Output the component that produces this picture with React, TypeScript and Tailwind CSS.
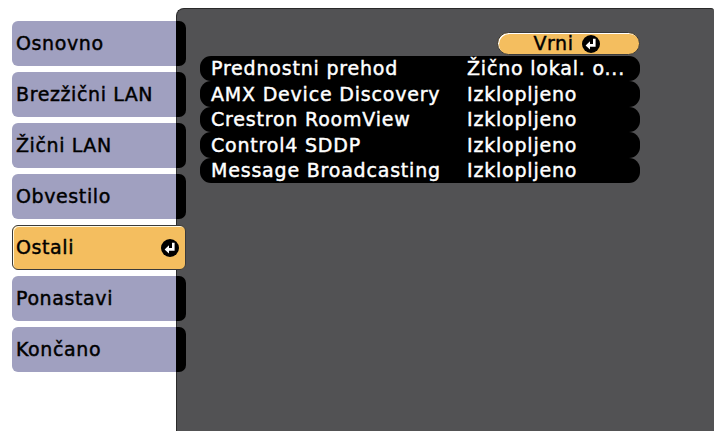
const tabs = [
  "Osnovno",
  "Brezžični LAN",
  "Žični LAN",
  "Obvestilo",
  "Ostali",
  "Ponastavi",
  "Končano",
];

const rows = [
  { label: "Prednostni prehod", value: "Žično lokal. o..." },
  { label: "AMX Device Discovery", value: "Izklopljeno" },
  { label: "Crestron RoomView", value: "Izklopljeno" },
  { label: "Control4 SDDP", value: "Izklopljeno" },
  { label: "Message Broadcasting", value: "Izklopljeno" },
];

function EnterIcon() {
  return (
    <svg width="18" height="18" viewBox="0 0 18 18" className="shrink-0">
      <circle cx="9" cy="9" r="9" fill="#000" />
      <path d="M12.3 3.8 V10.4 H7" fill="none" stroke="#fff" strokeWidth="2.6" />
      <path d="M8 6.2 L3.6 10.4 L8 14.6 Z" fill="#fff" />
    </svg>
  );
}

export default function App() {
  return (
    <div
      className="w-[714px] h-[433px] bg-white flex items-start pl-[12px] overflow-hidden [-webkit-text-stroke:0.45px]"
      style={{ fontFamily: '"DejaVu Sans", sans-serif' }}
    >
      {/* left menu */}
      <div className="relative z-10 mt-[21px] w-[174px] -mr-[10px] flex flex-col gap-[6px] shrink-0">
        {tabs.map((t) =>
          t === "Ostali" ? (
            <div
              key={t}
              className="h-[45px] w-[174px] flex items-center justify-between pl-[3px] pr-[6px] rounded-[6px] bg-[#f4be5f] border border-[#3a3a3a] shadow-[inset_1px_1px_0_#fff8e0] text-[19px] tracking-[0.6px] text-black"
            >
              <span>{t}</span>
              <EnterIcon />
            </div>
          ) : (
            <div key={t} className="h-[45px] flex">
              <div className="w-[164px] h-full flex items-center pl-[4px] rounded-l-[6px] bg-[#a0a0c0] text-[19px] tracking-[0.6px] text-black">
                {t}
              </div>
              <div className="w-[10px] h-full bg-black rounded-r-[7px]" />
            </div>
          )
        )}
      </div>

      {/* settings panel */}
      <div className="mt-[8px] h-[423px] flex-1 bg-[#525254] border-t border-l border-[#2a2a2a] rounded-tl-[8px] rounded-tr-[3px] flex flex-col pt-[23px]">
        <div className="flex justify-end pr-[74px]">
          <div className="w-[143px] h-[23px] flex items-center justify-center gap-[8px] pr-[4px] rounded-full bg-[#f4be5f] border border-[#3a3a3a] shadow-[inset_1px_1px_0_#fff] text-[19px] tracking-[0.6px] text-black">
            <span>Vrni</span>
            <EnterIcon />
          </div>
        </div>
        <div className="ml-[23px] w-[440px] mt-[1px] flex flex-col">
          {rows.map((r) => (
            <div
              key={r.label}
              className="h-[25.4px] flex items-center bg-black rounded-[11px] pl-[11px] text-white text-[19px] tracking-[0.8px] whitespace-nowrap"
            >
              <span className="w-[256px]">{r.label}</span>
              <span>{r.value}</span>
            </div>
          ))}
        </div>
      </div>
    </div>
  );
}
